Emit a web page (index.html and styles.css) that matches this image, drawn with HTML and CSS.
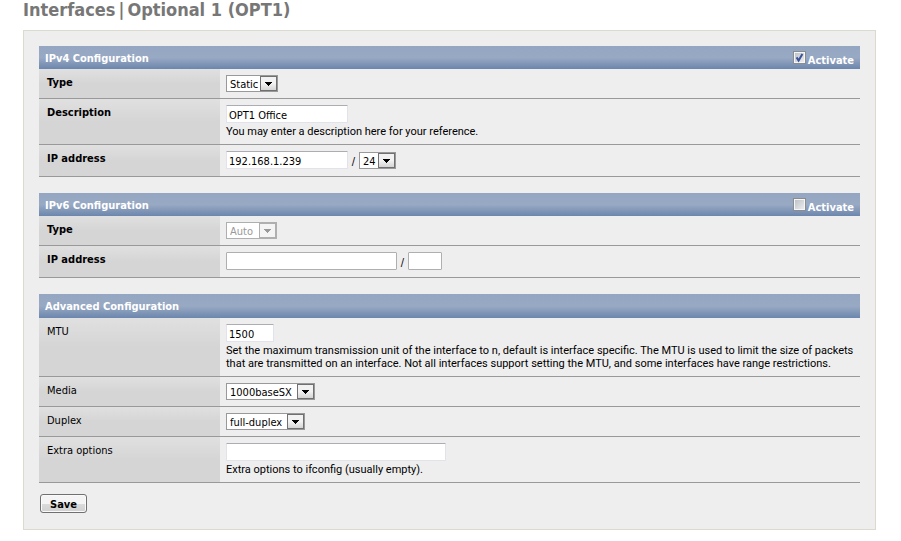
FILE: index.html
```
<!DOCTYPE html>
<html lang="en">
<head>
<meta charset="utf-8">
<title>Interfaces | Optional 1 (OPT1)</title>
<link rel="stylesheet" href="styles.css">
</head>
<body>
<main>
  <h1>Interfaces<span class="sep">|</span>Optional 1 (OPT1)</h1>
  <form class="panel">
    <section>
      <header class="bar">
        <h2>IPv4 Configuration</h2>
        <div class="activate">
          <span class="check">
            <input type="checkbox" id="v4-on" checked>
            <svg viewBox="0 0 13 13" aria-hidden="true"><path d="M3.6 6.4 5.6 9.6 9.4 3" fill="none" stroke="#3a5299" stroke-width="2"/></svg>
          </span>
          <label for="v4-on">Activate</label>
        </div>
      </header>
      <div class="row">
        <label class="name required" for="v4-type">Type</label>
        <div class="value">
          <span class="drop w-static"><select id="v4-type"><option>Static</option></select><svg viewBox="0 0 15 13" aria-hidden="true"><path d="M4 5h7v1h-1v1h-1v1H8v1H7V8H6V7H5V6H4z"/></svg></span>
        </div>
      </div>
      <div class="row">
        <label class="name required" for="descr">Description</label>
        <div class="value">
          <input class="w-text" type="text" id="descr" value="OPT1 Office">
          <p>You may enter a description here for your reference.</p>
        </div>
      </div>
      <div class="row">
        <label class="name required" for="v4-ip">IP address</label>
        <div class="value address">
          <input class="w-text" type="text" id="v4-ip" value="192.168.1.239">
          <span class="slash">/</span>
          <span class="drop w-bits"><select aria-label="Subnet bits"><option>24</option></select><svg viewBox="0 0 15 13" aria-hidden="true"><path d="M4 5h7v1h-1v1h-1v1H8v1H7V8H6V7H5V6H4z"/></svg></span>
        </div>
      </div>
    </section>

    <section>
      <header class="bar">
        <h2>IPv6 Configuration</h2>
        <div class="activate">
          <span class="check">
            <input type="checkbox" id="v6-on">
          </span>
          <label for="v6-on">Activate</label>
        </div>
      </header>
      <div class="row">
        <label class="name required" for="v6-type">Type</label>
        <div class="value">
          <span class="drop off w-auto"><select id="v6-type" disabled><option>Auto</option></select><svg viewBox="0 0 15 13" aria-hidden="true"><path d="M4 5h7v1h-1v1h-1v1H8v1H7V8H6V7H5V6H4z"/></svg></span>
        </div>
      </div>
      <div class="row">
        <label class="name required" for="v6-ip">IP address</label>
        <div class="value address">
          <input class="w-long" type="text" id="v6-ip" disabled>
          <span class="slash">/</span>
          <input class="w-prefix" type="text" aria-label="Prefix length" disabled>
        </div>
      </div>
    </section>

    <section>
      <header class="bar plain">
        <h2>Advanced Configuration</h2>
      </header>
      <div class="row">
        <label class="name" for="mtu">MTU</label>
        <div class="value">
          <input class="w-mtu" type="text" id="mtu" value="1500">
          <p>Set the maximum transmission unit of the interface to n, default is interface specific. The MTU is used to limit the size of packets<br>that are transmitted on an interface. Not all interfaces support setting the MTU, and some interfaces have range restrictions.</p>
        </div>
      </div>
      <div class="row">
        <label class="name" for="media">Media</label>
        <div class="value">
          <span class="drop w-media"><select id="media"><option>1000baseSX</option></select><svg viewBox="0 0 15 13" aria-hidden="true"><path d="M4 5h7v1h-1v1h-1v1H8v1H7V8H6V7H5V6H4z"/></svg></span>
        </div>
      </div>
      <div class="row">
        <label class="name" for="duplex">Duplex</label>
        <div class="value">
          <span class="drop w-duplex"><select id="duplex"><option>full-duplex</option></select><svg viewBox="0 0 15 13" aria-hidden="true"><path d="M4 5h7v1h-1v1h-1v1H8v1H7V8H6V7H5V6H4z"/></svg></span>
        </div>
      </div>
      <div class="row">
        <label class="name" for="extra">Extra options</label>
        <div class="value">
          <input class="w-extra" type="text" id="extra">
          <p>Extra options to ifconfig (usually empty).</p>
        </div>
      </div>
    </section>
    <button type="submit">Save</button>
  </form>
</main>
</body>
</html>
```
FILE: styles.css
```
* {
  box-sizing: border-box;
}

body {
  margin: 0;
  background: #fff;
  color: #000;
  font: 11px/13px Tahoma, "DejaVu Sans Condensed", "Noto Sans", sans-serif;
}

main {
  padding: 0 25px 11px 23px;
}

h1 {
  margin: 0;
  padding-bottom: 10px;
  color: #777;
  font-size: 18px;
  font-weight: bold;
  line-height: 20px;
}

.sep {
  margin: 0 3px;
}

.panel {
  padding: 15px 15px 16px;
  border: 1px solid #dadace;
  background: #eee;
}

section + section {
  margin-top: 16px;
}

.bar {
  display: flex;
  justify-content: space-between;
  height: 23px;
  padding: 5px 6px;
  background: linear-gradient(#94a6c1, #98a9c4 50%, #8398b8 75%, #6b86ad);
  color: #fff;
  font-weight: bold;
}

.plain {
  height: 24px;
}

.bar h2 {
  margin: 0;
  padding-top: 1px;
  font-size: 11px;
}

.activate {
  display: flex;
  gap: 2px;
}

.activate label {
  padding-top: 3px;
}

.check {
  position: relative;
  width: 13px;
  height: 13px;
}

.check input {
  display: block;
  width: 13px;
  height: 13px;
  margin: 0;
  appearance: none;
  border: 1px solid #8a8c8e;
  background: linear-gradient(135deg, #b8bec6, #f0f0f0);
  box-shadow: inset 0 0 0 1px #f6f6f6;
}

.check svg {
  position: absolute;
  inset: 0;
  pointer-events: none;
}

.row {
  display: grid;
  grid-template-columns: 181px 1fr;
  border-bottom: 1px solid #999;
}

.name {
  padding: 7px 8px;
  background: linear-gradient(#e0e0e0, #d5d5d5 50%, #d5d5d5);
}

.required {
  font-weight: bold;
}

.value {
  padding: 6px;
}

.value p {
  margin: 2px 0 0;
  font-family: Tahoma, Roboto, sans-serif;
  white-space: nowrap;
}

.address {
  display: flex;
  align-items: flex-end;
  padding-bottom: 7px;
}

.slash {
  width: 11px;
  padding-bottom: 1px;
  text-align: center;
}

input[type="text"] {
  display: block;
  height: 18px;
  margin: 0;
  padding: 2px 2px 0;
  border: 1px solid #e2e3ea;
  border-top-color: #abadb3;
  border-radius: 1px;
  background: #fff;
  color: #000;
  font: inherit;
}

input[type="text"]:disabled {
  border-color: #afafaf;
}

.drop {
  display: block;
  position: relative;
  height: 17px;
}

.drop select {
  display: block;
  width: 100%;
  height: 17px;
  margin: 0;
  padding: 1px 18px 0 3px;
  appearance: none;
  border: 1px solid #999;
  border-radius: 0;
  background: #fff;
  color: #000;
  font: inherit;
}

.drop svg {
  position: absolute;
  top: 1px;
  right: 1px;
  width: 17px;
  height: 15px;
  border: 1px solid #707070;
  background: linear-gradient(#f2f2f2 50%, #d4d4d4);
  pointer-events: none;
}

.off select {
  border-color: #afafaf;
  color: #999;
  opacity: 1;
}

.off svg {
  border-color: #afafaf;
  background: #f4f4f4;
  fill: #999;
}

.w-static { width: 52px; }
.w-auto { width: 51px; }
.w-bits { width: 37px; }
.w-media { width: 89px; }
.w-duplex { width: 79px; }
.w-text { width: 122px; }
.w-long { width: 171px; }
.w-prefix { width: 34px; }
.w-mtu { width: 48px; }
.w-extra { width: 220px; }

button {
  display: block;
  height: 19px;
  margin: 11px 0 0 1px;
  padding: 1px 9px 0;
  border: 1px solid #707070;
  border-radius: 3px;
  background: linear-gradient(#f4f4f4 50%, #dcdcdc 50%, #d0d0d0);
  box-shadow: inset 0 0 0 1px #fafafa;
  color: #000;
  font: inherit;
  font-weight: bold;
}
```
